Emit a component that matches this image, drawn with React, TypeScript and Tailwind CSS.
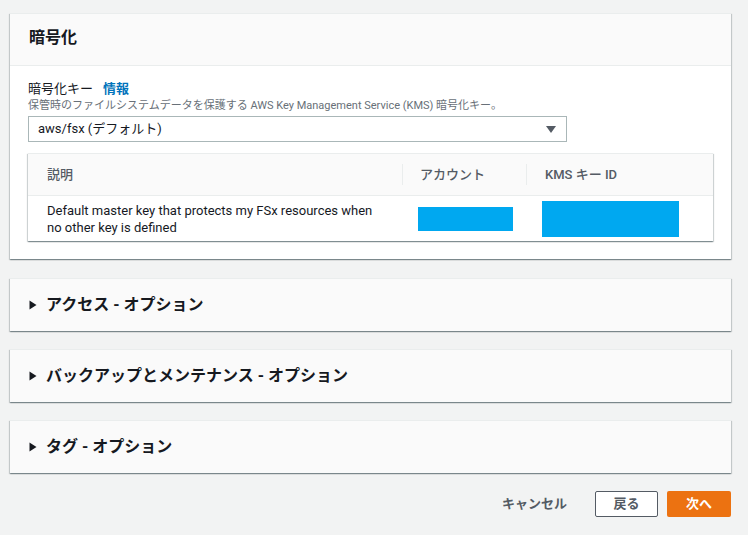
import React from 'react'

const font = { fontFamily: 'Roboto, "Noto Sans CJK JP", sans-serif' }

const cardShadow =
  'shadow-[0_1px_1px_0_rgba(0,28,36,0.3),1px_1px_1px_0_rgba(0,28,36,0.15),-1px_1px_1px_0_rgba(0,28,36,0.15)]'

function Collapsed({ title }: { title: string }) {
  return (
    <div className={`h-[53px] bg-[#fafafa] border-t border-[#eaeded] ${cardShadow} flex items-center pl-[19px]`}>
      <svg width="8" height="10" viewBox="0 0 8 10" className="mr-[9px]">
        <path d="M0.5 0.5 L7.5 5 L0.5 9.5 Z" fill="#16191f" />
      </svg>
      <span className="text-[16px] font-bold text-[#16191f]">{title}</span>
    </div>
  )
}

export default function App() {
  return (
    <div className="min-h-[535px] bg-[#f2f3f3] pt-[13px]" style={font}>
      <div className="ml-[10px] w-[721px] flex flex-col">
        {/* Encryption card */}
        <div className={`bg-white border-t border-[#eaeded] ${cardShadow}`}>
          <div className="h-[52px] bg-[#fafafa] border-b border-[#eaeded] flex items-center px-[19px]">
            <h2 className="text-[16px] font-bold text-[#16191f] -mt-[3px]">暗号化</h2>
          </div>
          <div className="px-[18px] pt-[14px] pb-[18px]">
            <div className="flex items-center gap-[10px] text-[13px] leading-[18px] text-[#16191f]">
              <span>暗号化キー</span>
              <span className="font-bold text-[#0073bb]">情報</span>
            </div>
            <div className="text-[11px] leading-[15px] text-[#687078]">
              保管時のファイルシステムデータを保護する AWS Key Management Service (KMS) 暗号化キー。
            </div>
            <div className="mt-[3px] w-[539px] h-[26px] border border-[#aab7b8] flex items-center justify-between pl-[9px] pr-[10px] text-[13px] text-[#16191f]">
              <span>aws/fsx (デフォルト)</span>
              <svg width="10" height="7" viewBox="0 0 10 7">
                <path d="M0 0 L10 0 L5 7 Z" fill="#545b64" />
              </svg>
            </div>

            <div className={`mt-[11px] border-t border-[#eaeded] ${cardShadow}`}>
              <div className="grid grid-cols-[374px_124px_1fr] h-[42px] bg-[#fafafa] border-b border-[#eaeded] text-[13px] font-medium text-[#545b64]">
                <div className="flex items-center pl-[19px]">説明</div>
                <div className="flex items-center pl-[18px] relative">
                  <span className="absolute left-0 top-[10px] h-[21px] border-l border-[#eaeded]" />
                  アカウント
                </div>
                <div className="flex items-center pl-[19px] relative">
                  <span className="absolute left-0 top-[10px] h-[21px] border-l border-[#eaeded]" />
                  KMS キー ID
                </div>
              </div>
              <div className="grid grid-cols-[374px_124px_1fr] h-[45px] bg-white text-[13px] leading-[17px] text-[#16191f]">
                <div className="flex items-center pl-[19px] pr-[26px]">
                  Default master key that protects my FSx resources when no other key is defined
                </div>
                <div className="flex items-center pl-[16px]">
                  <div className="w-[95px] h-[24px] bg-[#00a8f0]" />
                </div>
                <div className="flex items-center pl-[16px]">
                  <div className="w-[137px] h-[36px] bg-[#00a8f0]" />
                </div>
              </div>
            </div>
          </div>
        </div>

        <div className="mt-[19px] flex flex-col gap-[18px]">
          <Collapsed title="アクセス - オプション" />
          <Collapsed title="バックアップとメンテナンス - オプション" />
          <Collapsed title="タグ - オプション" />
        </div>

        <div className="mt-[18px] flex items-center justify-end">
          <span className="text-[13px] font-bold text-[#545b64] mr-[28px]">キャンセル</span>
          <button className="w-[63px] h-[26px] border border-[#545b64] rounded-[2px] bg-white text-[13px] font-bold text-[#545b64] mr-[9px]">
            戻る
          </button>
          <button className="w-[64px] h-[26px] rounded-[2px] bg-[#ec7211] text-[13px] font-bold text-white">
            次へ
          </button>
        </div>
      </div>
    </div>
  )
}
